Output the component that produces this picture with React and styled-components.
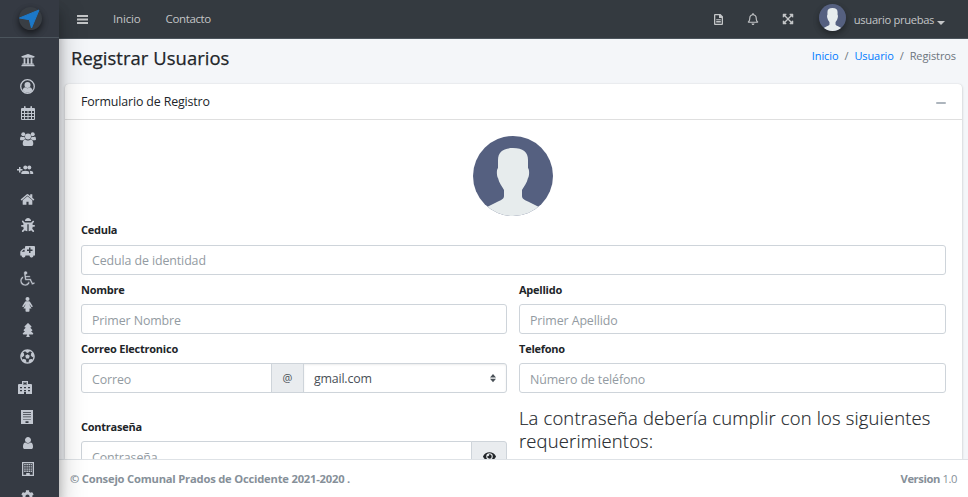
import React from "react";
import styled, { createGlobalStyle } from "styled-components";
import {
  FaUniversity, FaBug, FaAmbulance, FaTree, FaCog,
  FaRegBell, FaExpandArrowsAlt, FaFutbol, FaEye, FaWheelchair,
} from "react-icons/fa";

const Global = createGlobalStyle`
  * { box-sizing: border-box; }
  body {
    margin: 0; overflow: hidden; background: #f4f6f9; color: #212529;
    font-family: "Open Sans", "Noto Sans", sans-serif; font-size: 11.5px; line-height: 16px;
  }
  input, select, button { font: inherit; }
`;

const Text = styled.span`
  letter-spacing: ${(p) => p.$ls || 0}px;
  white-space: nowrap;
`;

const Shell = styled.div`display: flex; width: 968px; height: 497px; overflow: hidden;`;

const Sidebar = styled.aside`height: 497px; background: #353a43; color: #c2c7d0; overflow: hidden;`;
const SidebarFrame = styled.div`
  flex: 0 0 59px; z-index: 3;
  box-shadow: 0 14px 28px rgba(0, 0, 0, 0.25), 0 10px 10px rgba(0, 0, 0, 0.22);
`;
const Brand = styled.div`
  height: 38px; border-bottom: 1px solid #4b545c; display: flex; justify-content: center; padding: 7px 0 0 2px;
`;
const BrandDisc = styled.div`
  width: 23px; height: 23px; border-radius: 50%; background: #393e44;
  box-shadow: 0 3px 6px rgba(0, 0, 0, 0.3), 0 3px 6px rgba(0, 0, 0, 0.35);
  svg { display: block; overflow: visible; }
`;
const Menu = styled.nav`padding-top: 8px;`;
const MenuItem = styled.a`
  display: flex; align-items: center; justify-content: center;
  height: ${(p) => p.$h}px; padding: 0 ${(p) => p.$shift ?? 4}px ${(p) => p.$lift ?? 2}px 0;
  svg { display: block; flex: none; }
`;

const Main = styled.div`flex: 1; min-width: 0; display: flex; flex-direction: column;`;
const Navbar = styled.header`
  height: 39px; flex: none; background: #343a40; border-bottom: 1px solid #4b545c; color: #c3c5c7;
  display: flex; align-items: center; padding: 0 23px 0 18px;
`;
const NavLinks = styled.div`display: flex; align-items: center; gap: 25px;`;
const NavRight = styled.div`
  margin-left: auto; display: flex; align-items: center;
  svg { display: block; }
`;
const NavIcon = styled.span`width: 35px; display: flex; justify-content: center;`;
const NavUser = styled.div`display: flex; align-items: center; margin-left: 13px; gap: 8px;`;
const UserAvatar = styled.div`
  width: 27px; height: 27px; border-radius: 50%; margin-top: -4px;
  box-shadow: 0 3px 6px rgba(0, 0, 0, 0.16), 0 3px 6px rgba(0, 0, 0, 0.23);
`;
const UserName = styled.div`display: flex; align-items: center; gap: 3px; padding-top: 1px; font-size: 11.2px;`;
const Caret = styled.i`
  border: 4px solid transparent; border-top-color: currentColor; border-bottom: 0; margin-top: 6px;
`;

const PageHead = styled.div`
  height: 45px; flex: none; display: flex; justify-content: space-between; padding: 6px 12px 0 12px;
`;
const Title = styled.h1`
  margin: -1px 0 0; font-size: 18.4px; line-height: 28px; font-weight: 500; letter-spacing: 0.06px;
  -webkit-text-stroke: 0.25px currentColor;
`;
const Crumbs = styled.div`display: flex; gap: 6px; line-height: 22px; color: #6c757d; font-size: 11px; letter-spacing: -0.1px;`;
const CrumbLink = styled.a`color: #007bff;`;

const Card = styled.section`
  flex: 1; min-height: 0; margin: 0 6px; background: #fff; border-radius: 4px 4px 0 0; overflow: hidden;
  box-shadow: 0 0 1px rgba(0, 0, 0, 0.125), 0 1px 3px rgba(0, 0, 0, 0.2);
`;
const CardHeader = styled.div`
  height: 36px; border-bottom: 1px solid #dfdfdf; display: flex; align-items: center; justify-content: space-between;
  padding: 0 16px; font-size: 12.4px;
`;
const Collapse = styled.button`
  border: 0; padding: 0; background: #adb5bd; width: 10px; height: 2px; border-radius: 1px; margin-top: 3px;
`;
const CardBody = styled.form`padding: 16px 16px 0;`;
const Portrait = styled.div`display: flex; justify-content: center; height: 80px; padding-right: 1px;`;
const Columns = styled.div`display: grid; grid-template-columns: 426px 427px; column-gap: 12px;`;
const Field = styled.div``;
const Label = styled.label`
  display: block; height: ${(p) => p.$h || 29}px; padding-top: ${(p) => p.$top ?? 7}px;
  font-weight: 700; font-size: 11px; letter-spacing: -0.24px;
`;
const Input = styled.input`
  display: block; width: 100%; min-width: 0; height: 30px; border: 1px solid #ced4da; background: #fff;
  border-radius: ${(p) => (p.$grouped ? "3px 0 0 3px" : "3px")};
  padding: ${(p) => p.$top ?? 2}px 10px 0; font-size: 12.4px; outline: 0; letter-spacing: -0.1px;
  &::placeholder { color: #939ba2; opacity: 1; }
`;
const InputGroup = styled.div`display: flex;`;
const Addon = styled.span`
  flex: 0 0 ${(p) => p.$w}px; height: 30px; margin-left: -1px; background: #e9ecef; border: 1px solid #ced4da;
  display: flex; align-items: center; justify-content: center; color: #495057; font-size: 11px;
  border-radius: ${(p) => (p.$last ? "0 3px 3px 0" : 0)};
`;
const Select = styled.div`
  flex: 0 0 204px; height: 30px; margin-left: -1px; border: 1px solid #ced4da; border-radius: 0 3px 3px 0;
  display: flex; justify-content: space-between; align-items: center; padding: 2px 10px 0 10px;
  color: #495057; font-size: 12.4px; box-shadow: inset 0 1px 2px rgba(0, 0, 0, 0.075);
`;
const Rules = styled.h4`
  margin: 13px 0 0; font-size: 18.4px; line-height: 23px; font-weight: 300; color: #212529; letter-spacing: 0.18px;
  -webkit-text-stroke: 0.15px currentColor;
`;

const Footer = styled.footer`
  height: 38px; flex: none; background: #fff; border-top: 1px solid #dee2e6; color: #869099; z-index: 1;
  display: flex; justify-content: space-between; align-items: center; padding: 1px 11px 0 11px; font-size: 11.2px;
`;

const Person = ({ size, id }) => (
  <svg width={size} height={size} viewBox="0 0 80 80" display="block">
    <clipPath id={id}><circle cx="40" cy="40" r="40" /></clipPath>
    <g clipPath={`url(#${id})`}>
      <rect width="80" height="80" fill="#556080" />
      <path fill="#e7eced" d="M40 12c10 0 15 4 15 12v8c1.500 1 1.500 8 0 10-1 5-4 8-6 12v6c0 3 3 4 6 5.500L66 71v10H14V71l11-5.500c3-1.500 6-2.500 6-5.500v-6c-2-4-5-7-6-12-1.500-2-1.500-9 0-10v-8c0-8 5-12 15-12z" />
    </g>
  </svg>
);

const Glyph = ({ d, w = 14, h = w, box = "0 0 14 14" }) => (
  <svg width={w} height={h} viewBox={box} fill="currentColor" fillRule="evenodd"><path d={d} /></svg>
);

const UserCircle = () => (
  <svg width="15" height="15" viewBox="0 0 15 15">
    <circle cx="7.500" cy="7.500" r="6.800" fill="none" stroke="currentColor" strokeWidth="1.300" />
    <circle cx="7.500" cy="6" r="3" fill="currentColor" />
    <path d="M2.500 11c.8-2 2-2.700 2.700-2.700 1.300 1.200 3.300 1.200 4.600 0 .7 0 1.900.7 2.700 2.700-2.500 3.500-7.500 3.500-10 0z" fill="currentColor" />
  </svg>
);
const Group = () => (
  <svg width="16" height="14" viewBox="0 0 16 14" fill="currentColor">
    <circle cx="3.300" cy="2.200" r="2" /><circle cx="12.700" cy="2.200" r="2" /><circle cx="8" cy="4.500" r="3" />
    <path d="M1 4.500q2.300 1.200 3.500 0 0 1.500 1 2.700Q4 7.200 3.300 8.300H1Q0 8.300 0 7.300 0 5 1 4.500zM15 4.500q-2.300 1.200-3.500 0 0 1.500-1 2.700 1.500 0 2.200 1.100H15q1 0 1-1 0-2.300-1-2.800z" />
    <path d="M5.200 7.600q2.800 2 5.600 0 2.500.3 2.500 4.500 0 1.900-1.800 1.900h-7q-1.800 0-1.800-1.900 0-4.200 2.500-4.500z" />
  </svg>
);
const GroupAdd = () => (
  <svg width="17" height="10" viewBox="0 0 17 10" fill="currentColor">
    <path d="M2 2h1.500v2h2v1.500h-2v2H2v-2H0V4h2z" />
    <circle cx="8.300" cy="2.500" r="2" /><circle cx="12.300" cy="2.500" r="2" />
    <path d="M4.300 9V7.700q0-2 4-2t4 2V9zM13.200 9V7.500q0-.9-.8-1.700 3.800.2 3.800 1.900V9z" />
  </svg>
);
const Woman = () => (
  <svg width="11" height="15" viewBox="0 0 11 15" fill="currentColor">
    <circle cx="5.500" cy="2" r="2" />
    <path d="M4 4.300h3q.7 0 1.100.6L10.600 9q.3.800-.3 1-.6.200-1-.3L7.600 7.200v.8L9.600 11.500H7.500V14q0 .8-.8.8H4.300q-.8 0-.8-.8v-2.500H1.400L3.400 8v-.8L1.700 9.700q-.4.500-1 .3-.6-.2-.3-1L2.900 4.900q.4-.6 1.100-.6z" />
  </svg>
);
const Ambulance = () => (
  <svg width="15" height="12" viewBox="0 0 15 12" fill="currentColor" fillRule="evenodd">
    <path d="M6 0h8q1 0 1 1v8.500h-1.500a2 2 0 0 1-4 0H5.500a2 2 0 0 1-4 0H.3V6q0-.5.4-1l2-2q.4-.5 1-.5H5V1q0-1 1-1zM9 1.500v2H7V5h2v2h1.500V5h2V3.500h-2v-2zM1.600 5.800h3V3.700h-.9z" />
    <circle cx="3.500" cy="9.800" r="1.500" /><circle cx="11.500" cy="9.800" r="1.500" />
  </svg>
);
const HOME = "M1472 992v480q0 26-19 45t-45 19h-384v-384h-256v384h-384q-26 0-45-19t-19-45v-480q0-1 .5-3t.5-3l575-474 575 474q1 2 1 6zm223-69l-62 74q-8 9-21 11h-3q-13 0-21-7l-692-577-692 577q-12 8-24 7-13-2-21-11l-62-74q-8-10-7-23.500t11-21.500l719-599q32-26 76-26t76 26l244 204v-195q0-14 9-23t23-9h192q14 0 23 9t9 23v408l219 182q10 8 11 21.500t-7 23.500z";
const USER = "M1536 1399q0 109-62.500 187t-150.500 78h-854q-88 0-150.500-78t-62.500-187q0-85 8.500-160.500t31.500-152 58.500-131 94-89 134.500-34.500q131 128 313 128t313-128q76 0 134.500 34.500t94 89 58.500 131 31.500 152 8.500 160.500zm-256-887q0 159-112.500 271.500t-271.500 112.500-271.500-112.500-112.500-271.500 112.500-271.500 271.500-112.500 271.500 112.500 112.500 271.500z";
const CALENDAR = "M1 2h2V.8Q3 0 3.800 0t.8.8V2h4.800V.8Q9.400 0 10.200 0t.8.8V2h2q1 0 1 1v10q0 1-1 1H1q-1 0-1-1V3q0-1 1-1zM1 5v2h2V5zM4 5v2h2.500V5zM7.500 5v2H10V5zM11 5v2h2V5zM1 8v2h2V8zM4 8v2h2.500V8zM7.500 8v2H10V8zM11 8v2h2V8zM1 11v2h2v-2zM4 11v2h2.500v-2zM7.500 11v2H10v-2zM11 11v2h2v-2z";
const HOSPITAL = "M4 0h6v3h3q1 0 1 1v9H8v-2H6v2H0V4q0-1 1-1h3zM5.500 1v3h1V3h1v1h1V1h-1v1h-1V1zM2 6v1.300h2V6zM6 6v1.300h2V6zM10 6v1.300h2V6zM2 9v1.300h2V9zM6 9v1.300h2V9zM10 9v1.300h2V9z";
const SHEET = "M0 0h12v14H0zM2 2v.7h8V2zM2 4.300v.7h8v-.7zM2 6.600v.7h8v-.7zM2 8.900v.7h8v-.7zM4.500 11.200V13h3v-1.800z";
const BUILDING = "M0 0h12v14H0zM1.300 1.200v11.600h2.900V11h3.600v1.800h2.900V1.200z M2.200 2h1.500v1.300H2.200zM4.400 2h1.500v1.300H4.400zM6.500 2H8v1.300H6.500zM8.600 2h1.300v1.300H8.600zM2.200 4.200h1.500v1.300H2.200zM4.400 4.200h1.500v1.300H4.400zM6.500 4.200H8v1.300H6.500zM8.600 4.200h1.300v1.300H8.600zM2.200 6.400h1.500v1.300H2.200zM4.400 6.400h1.500v1.300H4.400zM6.500 6.400H8v1.300H6.500zM8.600 6.400h1.300v1.300H8.600zM2.200 8.600h1.500v1.300H2.200zM4.400 8.600h1.500v1.300H4.400zM6.500 8.600H8v1.300H6.500zM8.600 8.600h1.300v1.300H8.600z";
const FILE = "M1 0h5.500L9 2.500V10q0 1-1 1H1q-1 0-1-1V1q0-1 1-1zM1.300 1.300v8.400h6.400V4H5V1.300zM2.200 5.200h4.600v1H2.200zM2.200 7h4.600v1.500H2.200z";

const ThinWheelchair = styled(FaWheelchair)`path { stroke: #353a43; stroke-width: 22px; }`;

const menu = [
  { h: 27, icon: <FaUniversity size={14} />, lift: 0 },
  { h: 27, icon: <UserCircle />, lift: 1 },
  { h: 26, icon: <Glyph d={CALENDAR} />, lift: 1 },
  { h: 27, icon: <Group />, lift: 1 },
  { h: 35, icon: <GroupAdd />, shift: 9, lift: 1 },
  { h: 26, icon: <Glyph d={HOME} w={15} box="0 0 1792 1792" />, lift: 4 },
  { h: 26, icon: <FaBug size={14} />, lift: 5 },
  { h: 26, icon: <Ambulance />, lift: 2 },
  { h: 26, icon: <ThinWheelchair size={15} />, shift: 5, lift: 2 },
  { h: 26, icon: <Woman />, lift: 2 },
  { h: 27, icon: <FaTree size={14} />, lift: 4 },
  { h: 27, icon: <FaFutbol size={15} />, lift: 4 },
  { h: 32, icon: <Glyph d={HOSPITAL} h={13} box="0 0 14 13" />, shift: 9, lift: 1 },
  { h: 27, icon: <Glyph d={SHEET} w={12} h={14} box="0 0 12 14" />, shift: 5 },
  { h: 26, icon: <Glyph d={USER} w={14} box="0 0 1792 1792" />, lift: 2 },
  { h: 26, icon: <Glyph d={BUILDING} w={12} h={14} box="0 0 12 14" />, lift: 2 },
  { h: 27, icon: <FaCog size={13} />, lift: 1 },
];

export default function App() {
  return (
    <>
      <Global />
      <Shell>
        <SidebarFrame>
          <Sidebar>
            <Brand>
              <BrandDisc>
                <svg width="23" height="23" viewBox="0 0 23 23">
                  <path d="M20 3 12.500 21 10.300 12.700.5 11z" fill="#1c78c8" stroke="#1c78c8" strokeLinejoin="round" />
                </svg>
              </BrandDisc>
            </Brand>
            <Menu>
              {menu.map((m, i) => <MenuItem key={i} $h={m.h} $shift={m.shift} $lift={m.lift}>{m.icon}</MenuItem>)}
            </Menu>
          </Sidebar>
        </SidebarFrame>
        <Main>
          <Navbar>
            <NavLinks>
              <Glyph d="M0 0h11v2H0zM0 3.500h11v2H0zM0 7h11v2H0z" w={11} h={9} box="0 0 11 9" />
              <Text $ls={-0.15}>Inicio</Text>
              <Text $ls={-0.38}>Contacto</Text>
            </NavLinks>
            <NavRight>
              <NavIcon><Glyph d={FILE} w={9} h={11} box="0 0 9 11" /></NavIcon>
              <NavIcon><FaRegBell size={12} /></NavIcon>
              <NavIcon><FaExpandArrowsAlt size={12} /></NavIcon>
              <NavUser>
                <UserAvatar><Person size={27} id="nav-avatar" /></UserAvatar>
                <UserName><Text $ls={-0.34}>usuario pruebas</Text><Caret /></UserName>
              </NavUser>
            </NavRight>
          </Navbar>
          <PageHead>
            <Title>Registrar Usuarios</Title>
            <Crumbs>
              <CrumbLink>Inicio</CrumbLink><span>/</span><CrumbLink>Usuario</CrumbLink><span>/</span><span>Registros</span>
            </Crumbs>
          </PageHead>
          <Card>
            <CardHeader><Text $ls={-0.14}>Formulario de Registro</Text><Collapse type="button" aria-label="Minimizar" /></CardHeader>
            <CardBody>
              <Portrait><Person size={80} id="form-avatar" /></Portrait>
              <Field><Label $top={6}>Cedula</Label><Input $top={1} placeholder="Cedula de identidad" /></Field>
              <Columns>
                <Field><Label>Nombre</Label><Input placeholder="Primer Nombre" /></Field>
                <Field><Label>Apellido</Label><Input placeholder="Primer Apellido" /></Field>
                <Field>
                  <Label>Correo Electronico</Label>
                  <InputGroup>
                    <Input $grouped placeholder="Correo" />
                    <Addon $w={33}>@</Addon>
                    <Select>
                      <Text $ls={-0.2}>gmail.com</Text>
                      <Glyph d="M3 0 6 3.500H0zM0 4.800h6L3 8.300z" w={6} h={10} box="0 0 6 10" />
                    </Select>
                  </InputGroup>
                </Field>
                <Field><Label>Telefono</Label><Input placeholder="Número de teléfono" /></Field>
                <Field>
                  <Label $h={48} $top={26}>Contraseña</Label>
                  <InputGroup>
                    <Input $grouped type="password" placeholder="Contraseña" />
                    <Addon $w={36} $last><FaEye size={13} color="#212529" /></Addon>
                  </InputGroup>
                </Field>
                <Rules>La contraseña debería cumplir con los siguientes requerimientos:</Rules>
              </Columns>
            </CardBody>
          </Card>
          <Footer>
            <Text as="strong" $ls={-0.2}>© Consejo Comunal Prados de Occidente 2021-2020 .</Text>
            <Text $ls={-0.4}><b>Version</b> 1.0</Text>
          </Footer>
        </Main>
      </Shell>
    </>
  );
}
